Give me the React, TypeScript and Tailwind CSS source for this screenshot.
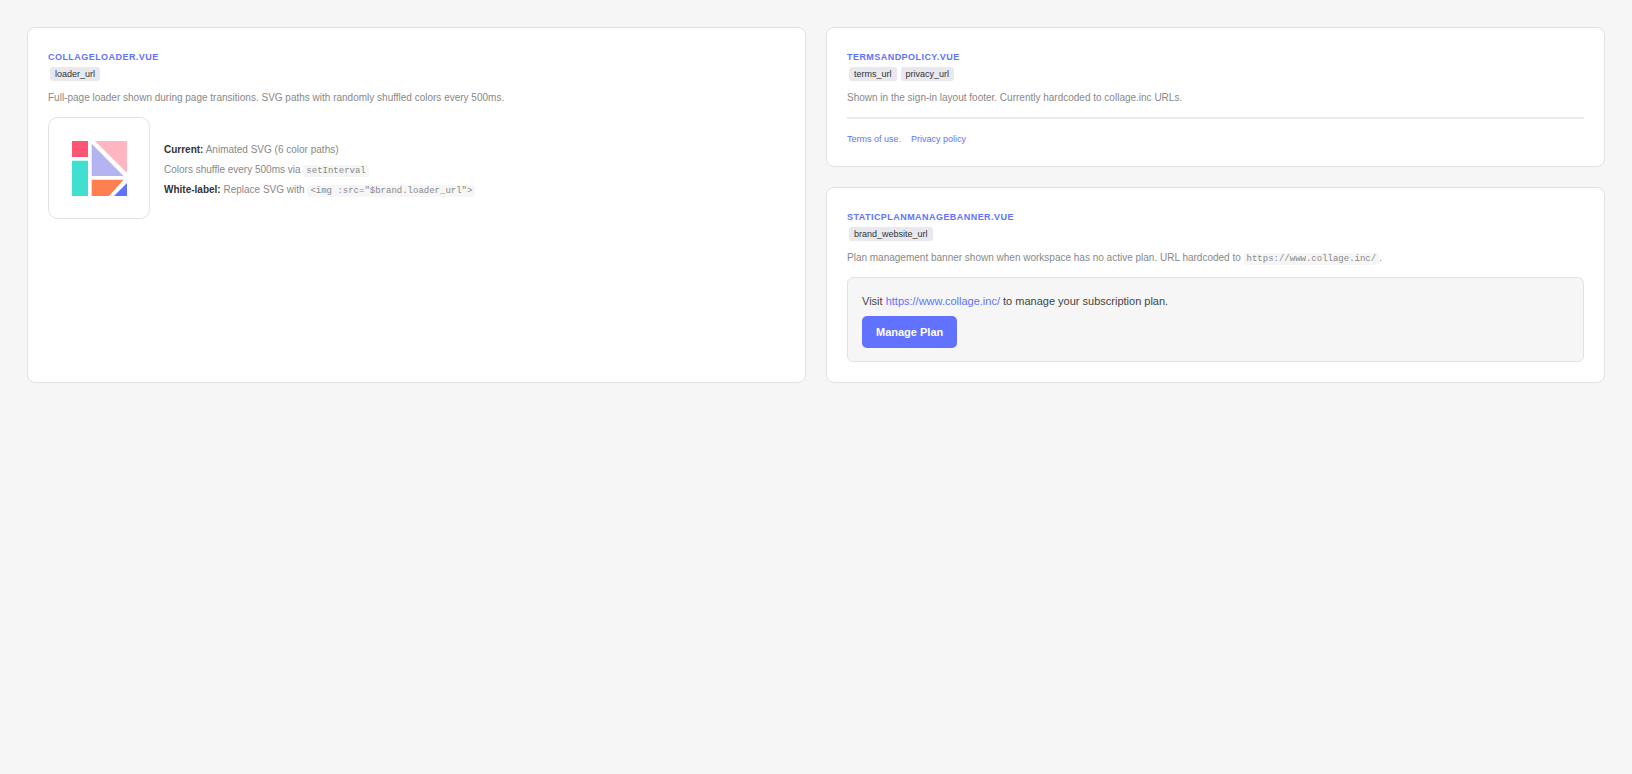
import type { ReactNode } from 'react';

function Code({ children }: { children: ReactNode }) {
  return (
    <code className="rounded-[3px] bg-[#f6f6f6] px-[3px] py-px font-['Liberation_Mono',monospace] text-[9px] leading-none">
      {children}
    </code>
  );
}

interface CardProps {
  title: string;
  tokens: string[];
  description: ReactNode;
  className?: string;
  children: ReactNode;
}

function Card({ title, tokens, description, className = '', children }: CardProps) {
  return (
    <section className={`rounded-lg border border-[#e2e2e4] bg-white p-5 ${className}`}>
      <h2 className="mt-[3px] text-[9px] leading-3 font-bold tracking-wider text-[#6172ff] uppercase">{title}</h2>
      <div className="mt-1 ml-0.5 flex gap-1">
        {tokens.map((token) => (
          <span key={token} className="rounded-[3px] bg-[#e8e8ee] px-[5px] text-[9px] leading-[14px] text-[#333333]">
            {token}
          </span>
        ))}
      </div>
      <p className="mt-[9px] mb-[11px] text-[10px] leading-4 text-[#888888]">{description}</p>
      {children}
    </section>
  );
}

function CollageLogo() {
  return (
    <svg viewBox="0 0 55 55" className="size-[55px]" aria-hidden="true">
      <path fill="#ff5574" d="M0 0h16v16H0z" />
      <path fill="#40e0d0" d="M0 19.7h16V55H0z" />
      <path fill="#b4b4f2" d="M19.7 2.7V35H51.5z" />
      <path fill="#ffb6c1" d="M23 0h32v32z" />
      <path fill="#ff7f50" d="M19.7 38.7H51.5L37 55H19.7z" />
      <path fill="#6172ff" d="M55 42v13H42z" />
    </svg>
  );
}

export default function App() {
  return (
    <main className="min-h-screen bg-[#f6f6f6] p-[27px] font-['Liberation_Sans',sans-serif]">
      <div className="grid grid-cols-2 gap-5">
        <Card
          title="CollageLoader.vue"
          tokens={['loader_url']}
          description="Full-page loader shown during page transitions. SVG paths with randomly shuffled colors every 500ms."
          className="row-span-2"
        >
          <div className="flex items-center gap-3.5">
            <div className="flex size-[102px] items-center justify-center rounded-[10px] border border-[#e2e2e4]">
              <CollageLogo />
            </div>
            <div className="pt-1 text-[10px] leading-5 text-[#888888]">
              <p>
                <strong className="text-[#333333]">Current:</strong> Animated SVG (6 color paths)
              </p>
              <p>
                Colors shuffle every 500ms via <Code>setInterval</Code>
              </p>
              <p>
                <strong className="text-[#333333]">White-label:</strong> Replace SVG with{' '}
                <Code>{'<img :src="$brand.loader_url">'}</Code>
              </p>
            </div>
          </div>
        </Card>

        <Card
          title="TermsAndPolicy.vue"
          tokens={['terms_url', 'privacy_url']}
          description="Shown in the sign-in layout footer. Currently hardcoded to collage.inc URLs."
        >
          <div className="flex gap-2.5 border-t-2 border-[#ebebeb] pt-3.5 text-[9px] leading-[13px] text-[#6172ff]">
            <a href="#terms">Terms of use.</a>
            <a href="#privacy">Privacy policy</a>
          </div>
        </Card>

        <Card
          title="StaticPlanManageBanner.vue"
          tokens={['brand_website_url']}
          description={
            <>
              Plan management banner shown when workspace has no active plan. URL hardcoded to{' '}
              <Code>https://www.collage.inc/</Code>.
            </>
          }
        >
          <div className="rounded-md border border-[#e2e2e4] bg-[#f6f6f6] px-3.5 py-[13px] text-[11px]">
            <p className="leading-5 text-[#444444]">
              Visit{' '}
              <a href="https://www.collage.inc/" className="text-[#6172ff]">
                https://www.collage.inc/
              </a>{' '}
              to manage your subscription plan.
            </p>
            <button type="button" className="mt-[5px] rounded-[5px] bg-[#6172ff] px-3.5 py-2 leading-4 font-bold text-white">
              Manage Plan
            </button>
          </div>
        </Card>
      </div>
    </main>
  );
}
